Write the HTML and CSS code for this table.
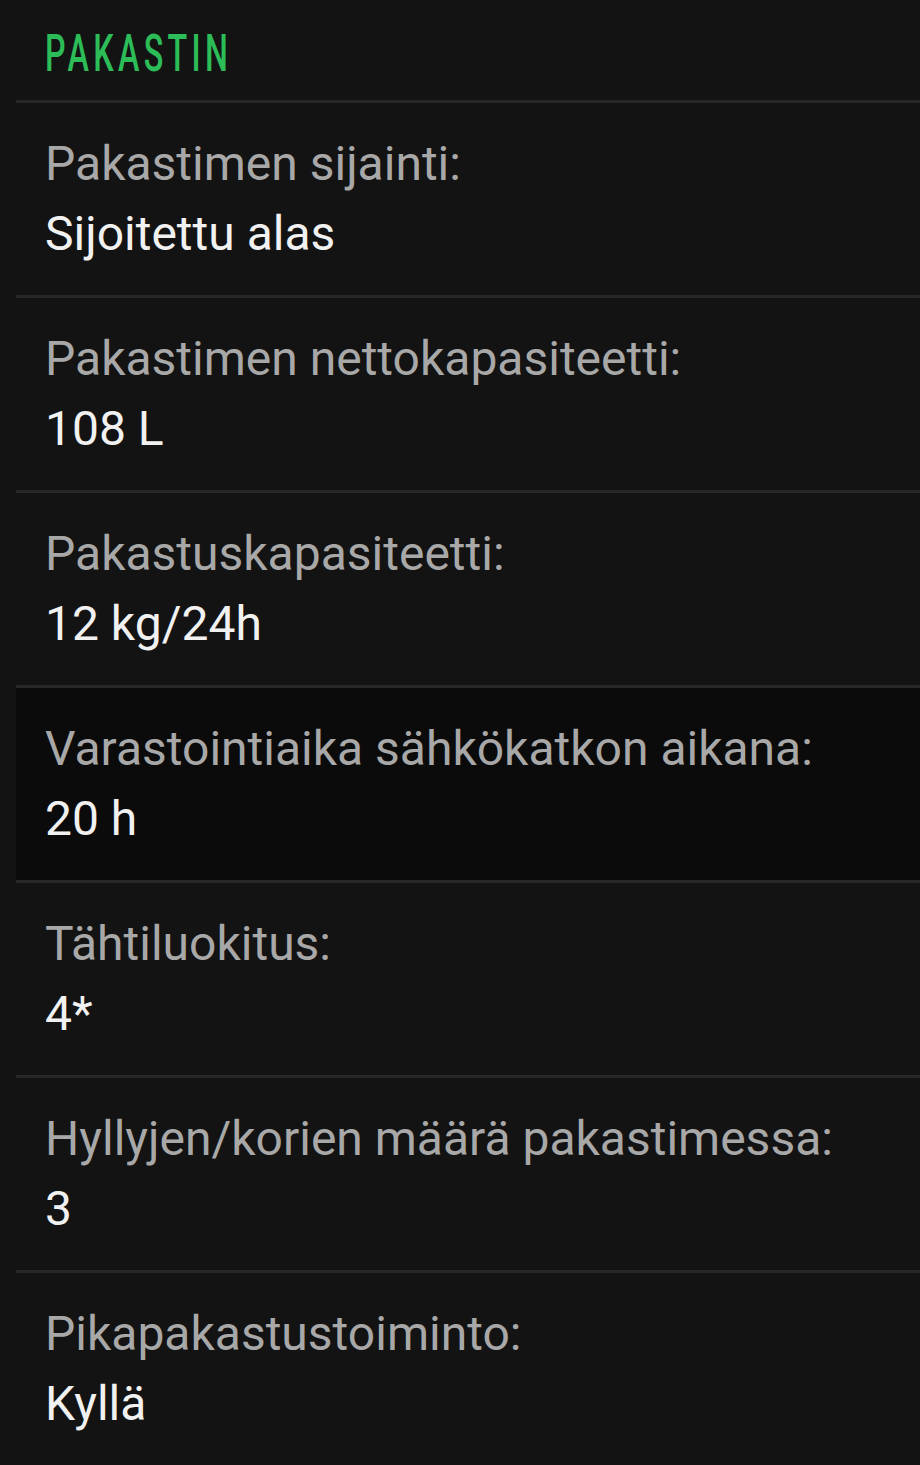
FILE: index.html
```html
<!DOCTYPE html>
<html lang="fi">
<head>
<meta charset="utf-8">
<title>Pakastin</title>
<link rel="stylesheet" href="styles.css">
</head>
<body>
<main class="section">
  <header class="section-header"><h2 class="section-title">PAKASTIN</h2></header>
  <ul class="spec-list">
    <li class="spec-row"><div class="spec-label">Pakastimen sijainti:</div><div class="spec-value">Sijoitettu alas</div></li>
    <li class="spec-row"><div class="spec-label">Pakastimen nettokapasiteetti:</div><div class="spec-value">108 L</div></li>
    <li class="spec-row"><div class="spec-label">Pakastuskapasiteetti:</div><div class="spec-value">12 kg/24h</div></li>
    <li class="spec-row is-active"><div class="spec-label">Varastointiaika sähkökatkon aikana:</div><div class="spec-value">20 h</div></li>
    <li class="spec-row"><div class="spec-label">Tähtiluokitus:</div><div class="spec-value">4*</div></li>
    <li class="spec-row"><div class="spec-label">Hyllyjen/korien määrä pakastimessa:</div><div class="spec-value">3</div></li>
    <li class="spec-row"><div class="spec-label">Pikapakastustoiminto:</div><div class="spec-value">Kyllä</div></li>
  </ul>
</main>
</body>
</html>
```
FILE: styles.css
```css
html, body {
  margin: 0;
  padding: 0;
  background: #131313;
}
body {
  font-family: Roboto, "Noto Sans", "Liberation Sans", sans-serif;
  overflow: hidden;
}
.section {
  margin-left: 16px;
}
.section-header {
  height: 100px;
  box-sizing: border-box;
  padding: 28px 0 0 29px;
}
.section-title {
  margin: 0;
  font-size: 52px;
  line-height: 52px;
  font-weight: 500;
  color: #2dbd58;
  letter-spacing: 7px;
  display: inline-block;
  transform: scaleX(0.62);
  transform-origin: left center;
  white-space: nowrap;
}
.spec-list {
  list-style: none;
  margin: 0;
  padding: 0;
}
.spec-row {
  border-top: 3px solid #272727;
  height: 195px;
  box-sizing: border-box;
  padding: 26px 0 0 29px;
  font-size: 48px;
  line-height: 70px;
}
.spec-row.is-active {
  background: #0b0b0b;
}
.spec-label {
  color: #a8a8a8;
  white-space: nowrap;
}
.spec-value {
  color: #f1f1f1;
  white-space: nowrap;
}
```
